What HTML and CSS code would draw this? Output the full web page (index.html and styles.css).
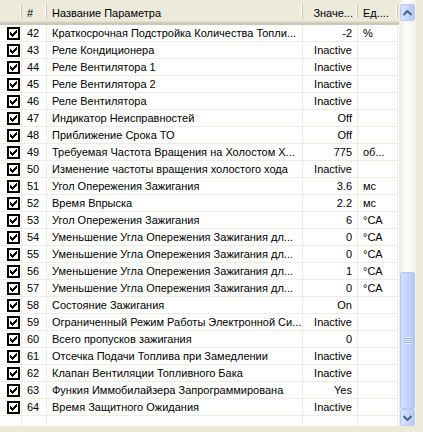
FILE: index.html
```html
<!DOCTYPE html>
<html lang="ru">
<head>
  <meta charset="UTF-8" />
  <title>Параметры</title>
  <link rel="stylesheet" href="styles.css">
</head>
<body>

  <div class="listview">
    <div class="grid">
      <div class="header">
        <div class="hcell"></div>
        <div class="hcell">#</div>
        <div class="hcell">Название Параметра</div>
        <div class="hcell right">Значе...</div>
        <div class="hcell">Ед....</div>
      </div>
      <div class="rows" id="rows"></div>
    </div>

    <div class="scrollbar">
      <div class="sb-btn">
        <svg width="9" height="6" viewBox="0 0 9 6"><path d="M0.5 5 L4.5 1 L8.5 5" fill="none" stroke="#4d6185" stroke-width="2"/></svg>
      </div>
      <div class="sb-track">
        <div class="sb-thumb">
          <div class="grip"></div>
        </div>
      </div>
      <div class="sb-btn">
        <svg width="9" height="6" viewBox="0 0 9 6"><path d="M0.5 1 L4.5 5 L8.5 1" fill="none" stroke="#4d6185" stroke-width="2"/></svg>
      </div>
    </div>
  </div>

  <script>
    const params = [
      [42, "Краткосрочная Подстройка Количества Топли...", "-2", "%"],
      [43, "Реле Кондиционера", "Inactive", ""],
      [44, "Реле Вентилятора 1", "Inactive", ""],
      [45, "Реле Вентилятора 2", "Inactive", ""],
      [46, "Реле Вентилятора", "Inactive", ""],
      [47, "Индикатор Неисправностей", "Off", ""],
      [48, "Приближение Срока ТО", "Off", ""],
      [49, "Требуемая Частота Вращения на Холостом Х...", "775", "об..."],
      [50, "Изменение частоты вращения холостого хода", "Inactive", ""],
      [51, "Угол Опережения Зажигания", "3.6", "мс"],
      [52, "Время Впрыска", "2.2", "мс"],
      [53, "Угол Опережения Зажигания", "6", "°CA"],
      [54, "Уменьшение Угла Опережения Зажигания дл...", "0", "°CA"],
      [55, "Уменьшение Угла Опережения Зажигания дл...", "0", "°CA"],
      [56, "Уменьшение Угла Опережения Зажигания дл...", "1", "°CA"],
      [57, "Уменьшение Угла Опережения Зажигания дл...", "0", "°CA"],
      [58, "Состояние Зажигания", "On", ""],
      [59, "Ограниченный Режим Работы Электронной Си...", "Inactive", ""],
      [60, "Всего пропусков зажигания", "0", ""],
      [61, "Отсечка Подачи Топлива при Замедлении", "Inactive", ""],
      [62, "Клапан Вентиляции Топливного Бака", "Inactive", ""],
      [63, "Функия Иммобилайзера Запрограммирована", "Yes", ""],
      [64, "Время Защитного Ожидания", "Inactive", ""]
    ];

    const checkSvg =
      '<svg width="13" height="13" viewBox="0 0 13 13">' +
      '<rect x="0" y="0" width="13" height="13" fill="#000"/>' +
      '<rect x="2" y="2" width="9" height="9" fill="#fff"/>' +
      '<path d="M3 5h1v3h-1zM4 6h1v3h-1zM5 7h1v3h-1zM6 6h1v3h-1zM7 5h1v3h-1zM8 4h1v3h-1zM9 3h1v3h-1z" fill="#000"/>' +
      '</svg>';

    const rows = document.getElementById("rows");

    params.forEach(p => {
      const row = document.createElement("div");
      row.className = "row";
      row.innerHTML =
        '<div class="cell cb">' + checkSvg + '</div>' +
        '<div class="cell">' + p[0] + '</div>' +
        '<div class="cell">' + p[1] + '</div>' +
        '<div class="cell right">' + p[2] + '</div>' +
        '<div class="cell">' + p[3] + '</div>';
      rows.appendChild(row);
    });

    const empty = document.createElement("div");
    empty.className = "row";
    empty.innerHTML = '<div class="cell"></div>'.repeat(5);
    rows.appendChild(empty);
  </script>

</body>
</html>
```

FILE: styles.css
```css
body {
  margin: 0;
  background-color: #ece9d8;
  font-family: 'Liberation Sans', Arial, sans-serif;
  font-size: 11px;
  color: #000;
}
.listview {
  display: flex;
  width: 416px;
  height: 426px;
  background-color: white;
  overflow: hidden;
}
.grid {
  width: 399px;
  overflow: hidden;
}
.header,
.row {
  display: grid;
  grid-template-columns: 22px 25px 256px 55px 40px;
}
.header {
  height: 25px;
  background: linear-gradient(#ebeadb, #ebeadb 21px, #e2decd 21px, #e2decd 22px, #d6d2c2 22px, #d6d2c2 23px, #cbc7b8 23px);
}
.hcell {
  position: relative;
  padding: 7px 5px 0 5px;
  white-space: nowrap;
  overflow: hidden;
}
.hcell::after {
  content: "";
  position: absolute;
  right: 0;
  top: 4px;
  bottom: 7px;
  width: 1px;
  background-color: #c7c5b2;
  box-shadow: -1px 0 0 #fff;
}
.right {
  text-align: right;
}
.row {
  height: 17px;
}
.cell {
  box-sizing: border-box;
  height: 17px;
  line-height: 16px;
  padding: 0 5px;
  border-right: 1px solid #eeede5;
  border-bottom: 1px solid #eeede5;
  white-space: nowrap;
  overflow: hidden;
}
.cell.cb {
  padding: 2px 0 0 7px;
  line-height: 0;
}
.scrollbar {
  width: 17px;
  padding-top: 4px;
  display: flex;
  flex-direction: column;
  background: linear-gradient(to right, #eeede5, #fdfdfa 40%, #f3f1ec);
}
.sb-btn {
  box-sizing: border-box;
  height: 17px;
  margin: 0 1px;
  display: flex;
  align-items: center;
  justify-content: center;
  border: 1px solid #b9c9ef;
  border-radius: 2px;
  background: linear-gradient(to right, #d8e4fd, #c6d6fc 50%, #b6c9f7);
}
.sb-track {
  flex: 1;
  display: flex;
  flex-direction: column;
  justify-content: flex-end;
}
.sb-thumb {
  box-sizing: border-box;
  height: 137px;
  margin: 0 1px;
  display: flex;
  align-items: center;
  justify-content: center;
  border: 1px solid #b5c8f3;
  border-radius: 2px;
  background: linear-gradient(to right, #d2dffd, #c3d4fc 50%, #b5c8f6);
}
.grip {
  width: 7px;
  height: 7px;
  background: repeating-linear-gradient(#eef3fe 0, #eef3fe 1px, #8cb0f8 1px, #8cb0f8 2px);
}
```
